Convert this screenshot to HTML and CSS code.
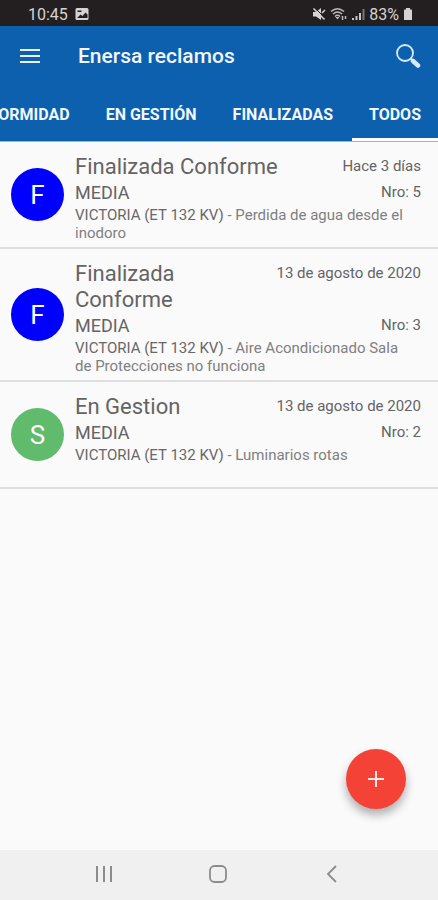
FILE: index.html
```html
<!DOCTYPE html>
<html lang="es">
<head>
<meta charset="utf-8">
<meta name="viewport" content="width=device-width, initial-scale=1">
<title>Enersa reclamos</title>
<link rel="stylesheet" href="styles.css">
</head>
<body>
<div class="status">
  <span class="status-group">
    <span>10:45</span>
    <svg width="14" height="14" viewBox="0 0 14 14" aria-hidden="true"><rect x="0.5" y="1" width="13" height="12" rx="1.5" fill="#d5d2d2"/><path d="M2 11l3.500-3.500 2 1.500 3-3.500 2 2v3.500z" fill="#231f20"/><path d="M2.500 3.500h4v1.500h-4z" fill="#231f20"/></svg>
  </span>
  <span class="status-group status-right">
    <svg width="14" height="14" viewBox="0 0 14 14" aria-hidden="true"><path d="M1 5h3l5-4v12L4 9.500H1z" fill="#d5d2d2"/><path d="M3 1l10 10" stroke="#231f20" stroke-width="1"/><path d="M1.500 1.500l11 11M10 6l3-3" stroke="#d5d2d2" stroke-width="1.500"/></svg>
    <svg width="18" height="14" viewBox="0 0 18 14" fill="none" stroke="#bdbaba" stroke-width="1.500" aria-hidden="true"><path d="M1 4.500q6.500-5.500 13 0M3 7q4.500-4 9 0M5 9.500q2.500-2.500 5 0"/><path d="M5.500 10h4l-2 2.500z" fill="#bdbaba" stroke="none"/><path d="M12.500 9v4M15.500 9v3"/></svg>
    <svg width="13" height="14" viewBox="0 0 13 14" aria-hidden="true"><path d="M0 11h2v2H0zM3.500 9h2v4h-2zM7 6h2v7H7z" fill="#c8c5c5"/><path d="M10.500 2h2v11h-2z" fill="#777"/></svg>
    <span>83%</span>
    <svg width="10" height="14" viewBox="0 0 10 14" aria-hidden="true"><path d="M3 1h4v1.500h1.500q.5 0 .5.500v9.500q0 .5-.5.500h-7q-.5 0-.5-.5V3q0-.5.5-.5H3z" fill="#d5d2d2"/></svg>
  </span>
</div>
<header class="appbar">
  <div class="toolbar">
    <button class="icon-btn" type="button" aria-label="Menú"><svg width="20" height="16" viewBox="0 0 20 16" stroke="#e8f1fa" stroke-width="2" aria-hidden="true"><path d="M0 2h20M0 8h20M0 14h20"/></svg></button>
    <h1 class="title">Enersa reclamos</h1>
    <button class="icon-btn" type="button" aria-label="Buscar"><svg width="26" height="26" viewBox="0 0 26 26" fill="none" stroke="#d8ebfc" aria-hidden="true"><circle cx="10" cy="10" r="8" stroke-width="1.800"/><path d="M15.500 15.500l3 3" stroke-width="2"/><path d="M18 18l5 4.500" stroke-width="4.500" stroke-linecap="round"/></svg></button>
  </div>
  <nav class="tabs">
    <a class="tab" href="#conformidad">CONFORMIDAD</a>
    <a class="tab" href="#gestion">EN GESTIÓN</a>
    <a class="tab" href="#finalizadas">FINALIZADAS</a>
    <a class="tab active" href="#todos" aria-current="page">TODOS</a>
  </nav>
</header>
<main class="content">
  <ul class="list">
    <li class="item">
      <span class="avatar">F</span>
      <div class="info">
        <div class="line"><h2 class="state">Finalizada Conforme</h2><span class="meta">Hace 3 días</span></div>
        <div class="line"><span class="level">MEDIA</span><span class="meta">Nro: 5</span></div>
        <p class="desc"><span class="place">VICTORIA (ET 132 KV)</span> - Perdida de agua desde el inodoro</p>
      </div>
    </li>
    <li class="item">
      <span class="avatar">F</span>
      <div class="info">
        <div class="line"><h2 class="state">Finalizada Conforme</h2><span class="meta">13 de agosto de 2020</span></div>
        <div class="line"><span class="level">MEDIA</span><span class="meta">Nro: 3</span></div>
        <p class="desc"><span class="place">VICTORIA (ET 132 KV)</span> - Aire Acondicionado Sala de Protecciones no funciona</p>
      </div>
    </li>
    <li class="item">
      <span class="avatar green">S</span>
      <div class="info">
        <div class="line"><h2 class="state">En Gestion</h2><span class="meta">13 de agosto de 2020</span></div>
        <div class="line"><span class="level">MEDIA</span><span class="meta">Nro: 2</span></div>
        <p class="desc"><span class="place">VICTORIA (ET 132 KV)</span> - Luminarios rotas</p>
      </div>
    </li>
  </ul>
  <button class="fab" type="button" aria-label="Agregar"><svg width="16" height="16" viewBox="0 0 16 16" stroke="#ffe9e6" stroke-width="2" aria-hidden="true"><path d="M8 0v16M0 8h16"/></svg></button>
</main>
<div class="sysnav">
  <button class="sys-btn" type="button" aria-label="Recientes"><svg width="18" height="18" viewBox="0 0 18 18" stroke="#8c8c8c" stroke-width="2" aria-hidden="true"><path d="M2 1v16M9 1v16M16 1v16"/></svg></button>
  <button class="sys-btn" type="button" aria-label="Inicio"><svg width="18" height="18" viewBox="0 0 18 18" fill="none" stroke="#8c8c8c" stroke-width="1.800" aria-hidden="true"><rect x="1" y="1" width="16" height="16" rx="4.500"/></svg></button>
  <button class="sys-btn" type="button" aria-label="Atrás"><svg width="18" height="18" viewBox="0 0 18 18" fill="none" stroke="#8c8c8c" stroke-width="1.800" aria-hidden="true"><path d="M13 1L5 9l8 8"/></svg></button>
</div>
</body>
</html>
```
FILE: styles.css
```css
* {
  box-sizing: border-box;
}

body {
  margin: 0;
  min-height: 100vh;
  display: flex;
  flex-direction: column;
  background: #fafafa;
  color: #646464;
  font-family: Roboto, "Liberation Sans", sans-serif;
}

button {
  border: 0;
  padding: 0;
  background: none;
  display: flex;
  align-items: center;
  justify-content: center;
}

svg {
  display: block;
}

.status {
  display: flex;
  justify-content: space-between;
  align-items: center;
  height: 26px;
  padding: 2px 25px 0 28px;
  background: #231f20;
  color: #d5d2d2;
  font-size: 16px;
}

.status-group {
  display: flex;
  align-items: center;
  gap: 7px;
}

.status-right {
  gap: 4px;
}

.appbar {
  background: #0d60ae;
  color: #f2f7fc;
  border-bottom: 1px solid #8db8e0;
}

.toolbar {
  display: flex;
  align-items: center;
  height: 60px;
  padding: 0 17px 0 18px;
}

.icon-btn {
  min-width: 24px;
  height: 40px;
}

.title {
  flex: 1;
  margin: 0;
  padding-left: 36px;
  font-size: 21px;
  font-weight: 500;
}

.tabs {
  display: flex;
  justify-content: flex-end;
  gap: 2px;
  overflow: hidden;
}

.tab {
  flex: none;
  padding: 18px 17px 13px;
  border-bottom: 3px solid transparent;
  color: inherit;
  font-size: 16px;
  font-weight: 700;
  line-height: 21px;
  text-decoration: none;
}

.tab.active {
  border-bottom-color: #fff;
}

.content {
  position: relative;
  flex: 1;
}

.list {
  margin: 0;
  padding: 0;
  list-style: none;
}

.item {
  display: flex;
  align-items: center;
  gap: 11px;
  min-height: 107px;
  padding: 0 17px 0 11px;
  border-bottom: 2px solid #dedede;
}

.avatar {
  flex: none;
  display: flex;
  align-items: center;
  justify-content: center;
  width: 53px;
  height: 53px;
  border-radius: 50%;
  background: #00f;
  color: #fff;
  font-size: 26px;
}

.avatar.green {
  background: #60bb6c;
}

.info {
  flex: 1;
  align-self: flex-start;
  padding: 12px 0 5px;
}

.line {
  display: flex;
  justify-content: space-between;
  gap: 12px;
  line-height: 26px;
}

.state {
  margin: 0;
  font-size: 22px;
  font-weight: 400;
}

.meta {
  flex: none;
  font-size: 15px;
  line-height: 24px;
}

.level {
  font-size: 18px;
}

.desc {
  margin: 0;
  padding-right: 8px;
  color: #808080;
  font-size: 15px;
  line-height: 18px;
}

.place {
  color: #686868;
}

.fab {
  position: absolute;
  right: 32px;
  bottom: 41px;
  width: 60px;
  height: 60px;
  border-radius: 50%;
  background: #f44336;
  box-shadow: 0 6px 10px rgba(0, 0, 0, 0.3);
}

.sysnav {
  display: flex;
  justify-content: center;
  gap: 54px;
  height: 50px;
  padding: 0 2px 2px 0;
  background: #f0f0f0;
}

.sys-btn {
  width: 60px;
}
```
